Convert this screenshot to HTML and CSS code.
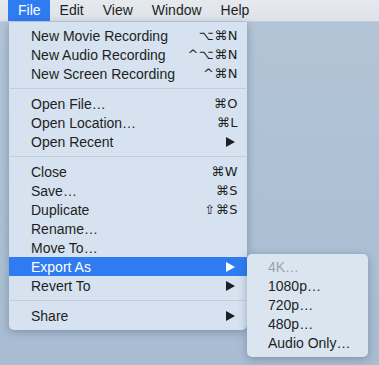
FILE: index.html
```html
<!DOCTYPE html>
<html lang="en">
<head>
    <meta charset="UTF-8">
    <title>File Menu</title>
    <link rel="stylesheet" href="styles.css">
</head>
<body>
    <div class="desktop">
        <nav class="menubar">
            <span class="bar-item open">File</span>
            <span class="bar-item">Edit</span>
            <span class="bar-item">View</span>
            <span class="bar-item">Window</span>
            <span class="bar-item">Help</span>
        </nav>

        <div class="menu">
            <div class="item"><span>New Movie Recording</span><span class="key">⌥⌘N</span></div>
            <div class="item"><span>New Audio Recording</span><span class="key">^⌥⌘N</span></div>
            <div class="item"><span>New Screen Recording</span><span class="key">^⌘N</span></div>
            <div class="sep"></div>
            <div class="item"><span>Open File…</span><span class="key">⌘O</span></div>
            <div class="item"><span>Open Location…</span><span class="key">⌘L</span></div>
            <div class="item"><span>Open Recent</span><span class="arrow"></span></div>
            <div class="sep"></div>
            <div class="item"><span>Close</span><span class="key">⌘W</span></div>
            <div class="item"><span>Save…</span><span class="key">⌘S</span></div>
            <div class="item"><span>Duplicate</span><span class="key">⇧⌘S</span></div>
            <div class="item"><span>Rename…</span></div>
            <div class="item"><span>Move To…</span></div>
            <div class="item active"><span>Export As</span><span class="arrow"></span></div>
            <div class="item"><span>Revert To</span><span class="arrow"></span></div>
            <div class="sep"></div>
            <div class="item"><span>Share</span><span class="arrow"></span></div>
        </div>

        <div class="menu submenu">
            <div class="item disabled"><span>4K…</span></div>
            <div class="item"><span>1080p…</span></div>
            <div class="item"><span>720p…</span></div>
            <div class="item"><span>480p…</span></div>
            <div class="item"><span>Audio Only…</span></div>
        </div>
    </div>
</body>
</html>
```

FILE: styles.css
```css
* {
    margin: 0;
    padding: 0;
    box-sizing: border-box;
}

body {
    font-family: 'Liberation Sans', 'DejaVu Sans', sans-serif;
    font-size: 14px;
    color: #1c1f23;
}

.desktop {
    position: relative;
    width: 379px;
    height: 365px;
    background: linear-gradient(180deg, #b3c4d6 0%, #a9bdd2 100%);
    overflow: hidden;
}

.menubar {
    display: flex;
    height: 22px;
    padding-left: 8px;
    background: linear-gradient(180deg, #e6e9ee 0%, #dde3ea 100%);
    border-bottom: 1px solid #c6ced8;
}

.bar-item {
    display: flex;
    align-items: center;
    padding: 0 9px 0 10px;
    line-height: 21px;
}

.bar-item.open {
    background: #2f7bf2;
    color: #fff;
}

.menu {
    position: absolute;
    top: 22px;
    left: 9px;
    width: 238px;
    padding: 4px 0 5px;
    background: #d6e2ef;
    border-radius: 0 0 5px 5px;
    box-shadow: 0 2px 8px rgba(40, 60, 90, 0.35);
}

.item {
    display: flex;
    justify-content: space-between;
    align-items: center;
    height: 19px;
    padding: 0 9px 0 22px;
}

.item.active {
    background: #2f7bf2;
    color: #fff;
}

.key {
    font-family: 'DejaVu Sans', sans-serif;
    font-size: 13px;
    letter-spacing: 0.5px;
}

.arrow {
    width: 0;
    height: 0;
    margin-right: 3px;
    border-top: 5px solid transparent;
    border-bottom: 5px solid transparent;
    border-left: 9px solid #1c1f23;
}

.item.active .arrow {
    border-left-color: #fff;
}

.sep {
    height: 11px;
    margin: 0 1px;
    background: linear-gradient(#c3cdd9, #c3cdd9) center / 100% 1px no-repeat;
}

.submenu {
    top: 254px;
    left: 247px;
    width: 121px;
    padding: 3px 0 5px;
    background: #dae5f0;
    border-radius: 5px;
}

.submenu .item {
    padding-left: 21px;
}

.item.disabled {
    color: #9aa3ad;
}
```
